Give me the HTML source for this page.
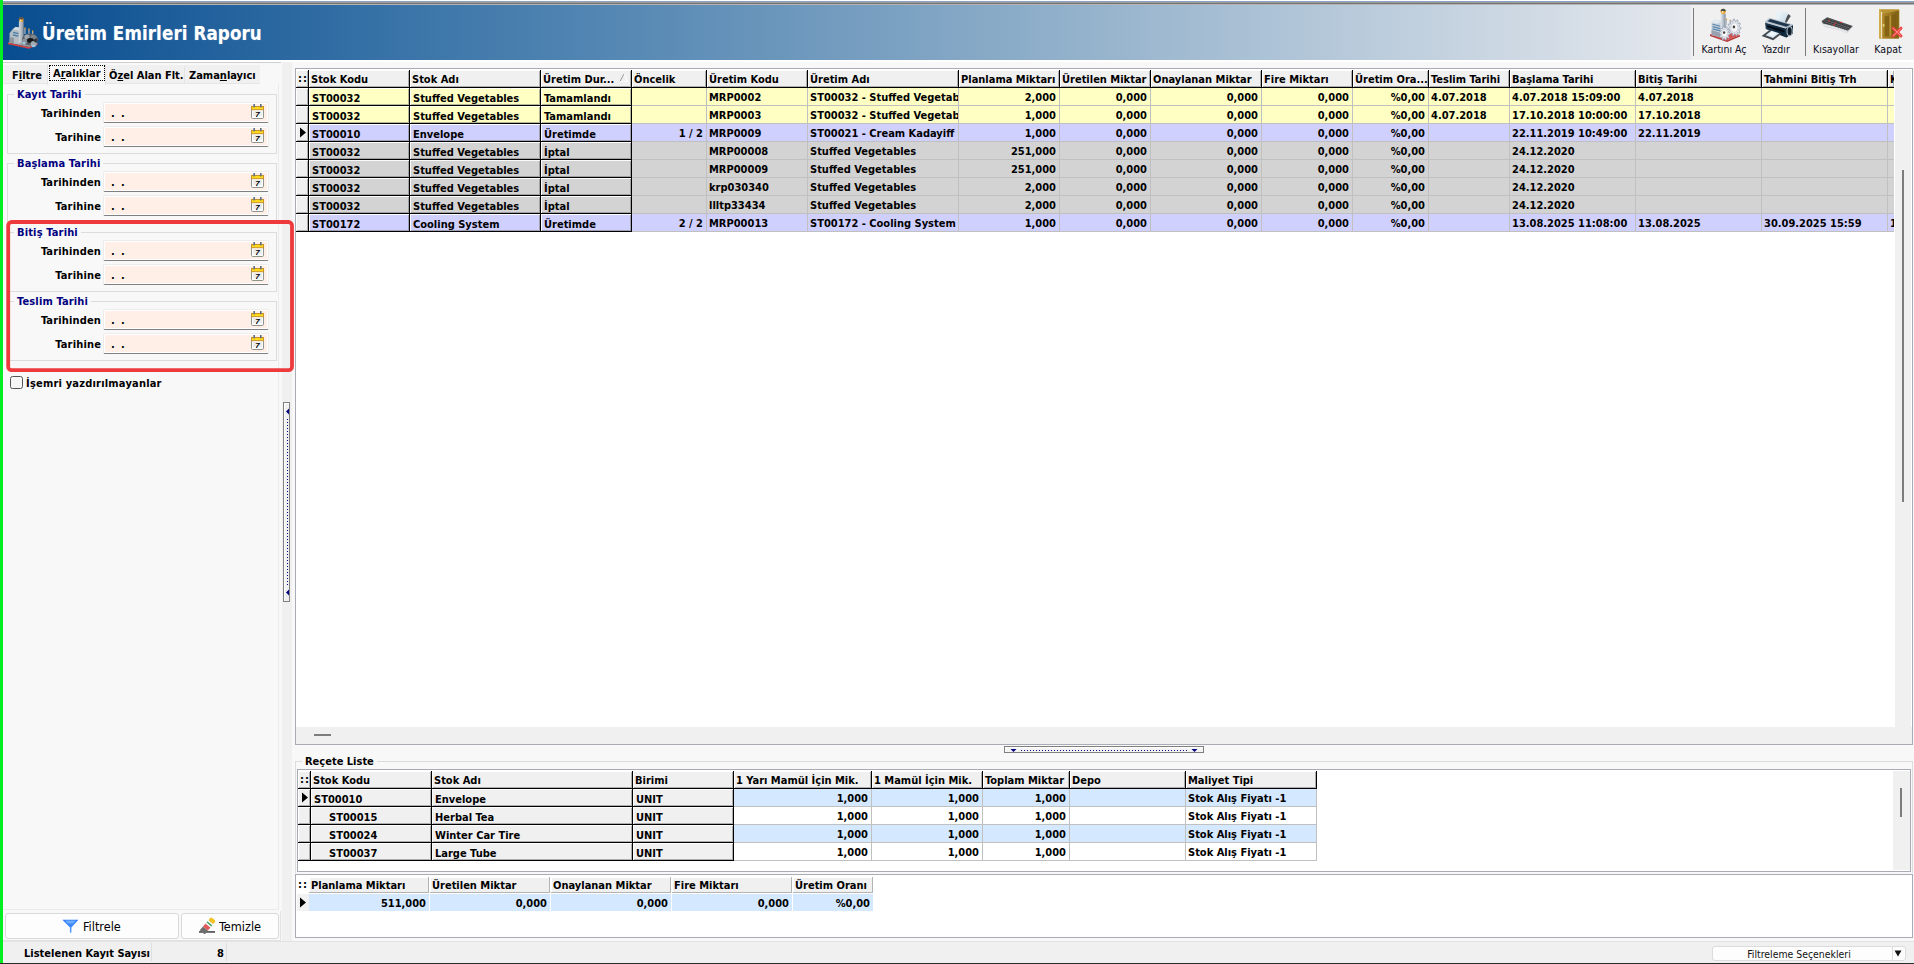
<!DOCTYPE html><html lang="tr"><head><meta charset="utf-8"><title>Üretim Emirleri Raporu</title><style>
*{box-sizing:border-box;margin:0;padding:0}
html,body{width:1914px;height:964px;overflow:hidden;background:#fff}
body{font-family:"DejaVu Sans Condensed","Liberation Sans",sans-serif;font-size:11px;font-weight:bold;color:#000;position:relative;line-height:13px}
.a{position:absolute}
.t{position:absolute;white-space:nowrap;overflow:hidden}
.n{font-weight:normal}
.r{text-align:right}
/* main grid */
.row{position:absolute;left:296px;width:1598px;height:17px}
.c{position:absolute;top:0;height:17px;white-space:nowrap;overflow:hidden;padding:3px 3px 0 2px;border-right:1px solid #c0c0c0;line-height:13px}
.line{position:absolute;left:309px;width:1585px;height:1px;background:#c0c0c0}
.f{padding-left:3px;border-right:1px solid #000;box-shadow:inset 1px 1px 0 rgba(255,255,255,.9),inset -1px -1px 0 rgba(120,120,120,.55);padding-top:4px;height:18px;border-bottom:1px solid #000}
.ind{background:#f0f0f0}
.hc{position:absolute;top:70px;height:18px;background:#f0f0f0;border-right:1px solid #000;border-bottom:1px solid #000;box-shadow:inset 1px 1px 0 #fff,inset -1px -1px 0 rgba(120,120,120,.55);padding:3px 2px 0 2px;white-space:nowrap;overflow:hidden;line-height:13px}
.y{background:#ffffc4}.l{background:#d0d0ff}.g{background:#d3d3d3}
.grp{position:absolute;border:1px solid #dcdcdc}
.gl{position:absolute;color:#000080;background:#f8f8f8;padding:0 3px;white-space:nowrap;line-height:13px;letter-spacing:.15px}
.inp{position:absolute;left:103px;width:166px;height:21px;background:#ffefe6;border:1px solid #ececec;border-bottom:1px solid #808080;border-radius:2px;box-shadow:inset 0 0 0 1px #fff}
.lab{position:absolute;left:10px;width:91px;text-align:right;white-space:nowrap;line-height:13px;letter-spacing:.15px}
.dots{position:absolute;left:7px;top:4px;line-height:13px;letter-spacing:1.4px}
.cal{position:absolute;left:147px;top:0px}
</style></head><body>
<div class="a" style="left:0;top:0;width:1914px;height:1px;background:#fdfdfd"></div>
<div class="a" style="left:0;top:1px;width:1914px;height:1px;background:#8aa2c4"></div>
<div class="a" style="left:0;top:2px;width:1914px;height:1px;background:#9c9c9c"></div><div class="a" style="left:0;top:3px;width:1914px;height:1px;background:#747474"></div>
<div class="a" style="left:0;top:4px;width:1914px;height:1px;background:#b4b4b4"></div>
<div class="a" style="left:3px;top:5px;width:1911px;height:55px;background:linear-gradient(90deg,#084d90 0,#477eae 506px,#8bacc8 1013px,#e5e8ed 1688px)"></div>
<div class="a" style="left:1691px;top:5px;width:223px;height:55px;background:#f0f0f0"></div>
<div class="t" style="left:42px;top:21.5px;font-size:18.6px;line-height:24px;color:#fff;letter-spacing:.1px;text-shadow:0 0 1px rgba(255,255,255,.4)">Üretim Emirleri Raporu</div>
<svg class="a" style="left:6px;top:16px" width="34" height="34" viewBox="0 0 34 34"><defs><linearGradient id="ch2" x1="0" x2="1" y1="0" y2="0"><stop offset="0" stop-color="#d2d8de"/><stop offset=".6" stop-color="#aab2ba"/><stop offset="1" stop-color="#808a94"/></linearGradient></defs><polygon points="2,26.5 14,23 31.8,27.4 23,31" fill="#9aa2a8"/><polygon points="2,26.5 23,31 31.8,27.4 31.8,28.8 23,32.8 2,28.2" fill="#d04444"/><polygon points="3.6,26.6 3.6,17 6.5,13.4 9.5,11 13.2,11.6 13.2,28.6" fill="#b4bcc4"/><polygon points="6.5,13.4 9.5,11 13.2,11.6 13.2,14.6" fill="#d4dae0"/><path d="M7 16.4 L12.6 17.6 M7 19 L12.6 20.2" stroke="#4c7ea8" stroke-width="1.3"/><polygon points="3.6,21 8,22 8,27.6 3.6,26.6" fill="#8e969e"/><rect x="12.9" y="5" width="4.8" height="22" fill="url(#ch2)"/><circle cx="15.3" cy="3.6" r="2.4" fill="#f0a830"/><path d="M12.9 3.4 A2.4 2.4 0 0 1 17.7 3.4 Z" fill="#54504a"/><circle cx="14.6" cy="4.2" r=".8" fill="#fff0c0"/><rect x="18.3" y="13.0" width="1.3" height="5.0" fill="#a8b0b8"/><rect x="18.3" y="11.5" width="1.3" height="1.8" fill="#e8a838"/><rect x="22.3" y="14.0" width="1.3" height="5.0" fill="#a8b0b8"/><rect x="22.3" y="12.5" width="1.3" height="1.8" fill="#e8a838"/><rect x="26.0" y="16.0" width="1.3" height="4.0" fill="#a8b0b8"/><rect x="26.0" y="14.5" width="1.3" height="1.8" fill="#e8a838"/><ellipse cx="24" cy="23.6" rx="8" ry="6" fill="#5a6066"/><ellipse cx="21" cy="21" rx="2.6" ry="2.4" fill="#9ea6ae"/><ellipse cx="27.4" cy="21.4" rx="3" ry="2.6" fill="#7c848c"/><ellipse cx="24.4" cy="24.4" rx="3.4" ry="2.4" fill="#14161a"/><ellipse cx="18.4" cy="25.6" rx="2.6" ry="2.8" fill="#8a929a"/><ellipse cx="27.6" cy="28" rx="3" ry="3" fill="#a2aab2"/><ellipse cx="18" cy="27" rx="1.4" ry="1.2" fill="#9cc8e0"/><ellipse cx="27.4" cy="30" rx="1.6" ry="1.2" fill="#9cc8e0"/><ellipse cx="29.6" cy="24.6" rx="1.6" ry="2" fill="#30343a"/></svg>
<div class="a" style="left:1693px;top:8px;width:1px;height:48px;background:#7a7a7a"></div>
<div class="a" style="left:1805px;top:8px;width:1px;height:48px;background:#7a7a7a"></div>
<div class="t n" style="left:1684px;top:43px;width:80px;text-align:center;font-size:10.5px;color:#0c0c20;line-height:13px">Kartını Aç</div>
<div class="t n" style="left:1736px;top:43px;width:80px;text-align:center;font-size:10.5px;color:#0c0c20;line-height:13px">Yazdır</div>
<div class="t n" style="left:1796px;top:43px;width:80px;text-align:center;font-size:10.5px;color:#0c0c20;line-height:13px">Kısayollar</div>
<div class="t n" style="left:1848px;top:43px;width:80px;text-align:center;font-size:10.5px;color:#0c0c20;line-height:13px">Kapat</div>
<svg class="a" style="left:1708px;top:8px" width="34" height="34" viewBox="0 0 34 34"><defs><linearGradient id="ch" x1="0" x2="1" y1="0" y2="0"><stop offset="0" stop-color="#e2e8ee"/><stop offset=".55" stop-color="#b4bec8"/><stop offset="1" stop-color="#7c8a98"/></linearGradient></defs><polygon points="2,26.3 15,22 32,27 19,32.2" fill="#d85050"/><polygon points="2,26.3 19,32.2 32,27 32,28.6 19,34 2,28" fill="#b83838"/><polygon points="3.5,27 3.5,14.5 7,11.5 13.5,13 13.5,29.5" fill="#c6d2de"/><polygon points="3.5,14.5 7,11.5 13.5,13 10,15.8" fill="#e4eaf0"/><polygon points="3.5,22 13.5,25 13.5,29.5 3.5,27" fill="#98a2ae"/><path d="M4.5 16.3 L12.5 18.3 M4.5 18.6 L12.5 20.6 M4.5 20.9 L12.5 22.9" stroke="#5c86aa" stroke-width="1.1"/><rect x="12.6" y="5.5" width="5" height="17" fill="url(#ch)"/><circle cx="15.2" cy="3.3" r="2.6" fill="#f2a628"/><path d="M12.6 3.3 A2.6 2.6 0 0 1 17.8 3.3 Z" fill="#4a4e54"/><circle cx="14.6" cy="3.9" r=".9" fill="#fff2c8"/><rect x="17.8" y="10.6" width="1.3" height="1.6" fill="#e0a040"/><rect x="21.5" y="11.8" width="1.3" height="1.6" fill="#e0a040"/><rect x="17.9" y="12" width="1.1" height="5" fill="#b4bcc6"/><rect x="21.6" y="13.2" width="1.1" height="4" fill="#b4bcc6"/><path d="M33.00 19.60 L32.93 20.82 L31.09 21.39 L30.84 22.24 L31.95 24.25 L31.39 25.23 L29.60 24.41 L29.04 24.95 L29.14 27.42 L28.26 27.85 L27.10 25.90 L26.40 25.96 L25.46 28.11 L24.54 27.85 L24.37 25.39 L23.76 24.95 L22.08 26.10 L21.41 25.23 L22.29 23.04 L21.96 22.24 L20.07 22.02 L19.87 20.82 L21.52 19.60 L21.57 18.69 L20.07 17.18 L20.40 16.03 L22.29 16.16 L22.71 15.43 L22.08 13.10 L22.83 12.37 L24.37 13.81 L25.02 13.49 L25.46 11.09 L26.40 11.00 L27.10 13.30 L27.78 13.49 L29.14 11.78 L29.97 12.37 L29.60 14.79 L30.09 15.43 L31.95 14.95 L32.40 16.03 L31.09 17.81 L31.23 18.69Z" fill="#e4e8ee" stroke="#8c98ac" stroke-width=".7"/><ellipse cx="26.40" cy="19.60" rx="3.63" ry="4.73" fill="#f6f8fa" stroke="#b4bcc8" stroke-width=".6"/><ellipse cx="25.90" cy="19.00" rx="1.30" ry="1.49" fill="#4a423c"/><path d="M22.20 25.20 L22.13 26.33 L20.54 26.85 L20.29 27.62 L21.13 29.43 L20.56 30.29 L19.04 29.51 L18.48 29.95 L18.33 32.05 L17.48 32.31 L16.60 30.53 L15.95 30.46 L14.87 32.05 L14.06 31.62 L14.16 29.51 L13.67 28.97 L12.07 29.43 L11.61 28.47 L12.66 26.85 L12.51 26.03 L11.00 25.20 L11.07 24.07 L12.66 23.55 L12.91 22.78 L12.07 20.97 L12.64 20.11 L14.16 20.89 L14.72 20.45 L14.87 18.35 L15.72 18.09 L16.60 19.87 L17.25 19.94 L18.33 18.35 L19.14 18.78 L19.04 20.89 L19.53 21.43 L21.13 20.97 L21.59 21.93 L20.54 23.55 L20.69 24.37Z" fill="#e4e8ee" stroke="#8c98ac" stroke-width=".7"/><ellipse cx="16.60" cy="25.20" rx="3.08" ry="3.96" fill="#f6f8fa" stroke="#b4bcc8" stroke-width=".6"/><ellipse cx="16.10" cy="24.60" rx="1.20" ry="1.38" fill="#4a423c"/></svg>
<svg class="a" style="left:1760px;top:8px" width="36" height="34" viewBox="0 0 36 34"><defs><linearGradient id="pp" x1="0" x2="1" y1="0" y2="1"><stop offset="0" stop-color="#f4fafe"/><stop offset="1" stop-color="#c4d8e4"/></linearGradient><linearGradient id="pb" x1="0" x2="1" y1="0" y2="0"><stop offset="0" stop-color="#1c3850"/><stop offset=".6" stop-color="#0a2236"/><stop offset="1" stop-color="#2c4a60"/></linearGradient></defs><polygon points="28.3,6 30.8,8 26,15.5 23,14" fill="#4c5054"/><polygon points="17.3,2.8 28.3,4.6 24.6,15 15.2,11.8" fill="url(#pp)"/><polygon points="17.3,2.8 22,3.6 19,12.8 15.2,11.8" fill="#e6f0f6" opacity=".8"/><polygon points="5,13.5 9.5,9.8 33,16.5 33,18 26,20.5 5,14.8" fill="#b8c2cc"/><polygon points="7.5,13.2 10.2,11 30.5,16.8 26.2,18.8" fill="#20384e"/><polygon points="5,14.2 26,20.2 33,17.5 33,25.5 26,29.6 5.8,21" fill="url(#pb)"/><polygon points="26,20.2 33,17.5 33,25.5 26,29.6" fill="#10283c"/><ellipse cx="29.6" cy="23.2" rx="2.6" ry="4.6" fill="#0c1c2a" stroke="#aab4be" stroke-width="1.1"/><polygon points="7,17.2 24.5,22.4 24.5,24.6 7,19" fill="#020a12"/><path d="M5 14.2 L26 20.2" stroke="#cfd7df" stroke-width=".9"/><polygon points="1.6,28 9.5,22 21.5,25.8 13.2,32.2" fill="#45494e"/><polygon points="5.6,27.2 11.4,22.8 19.2,25.3 13,30" fill="#d4e6f2"/><polygon points="8,26.6 11.8,23.6 16.8,25.2 12.8,28.4" fill="#eef6fc"/></svg>
<svg class="a" style="left:1820px;top:15px" width="36" height="20" viewBox="0 0 36 20"><path d="M1.3 6.6 L7.2 2.4 L33 11.4 L27 18.2 Q14 13.6 5 12 Q2 10.6 1.3 6.6 Z" fill="#d4d6d8"/><path d="M2.4 9.8 Q14 12 27.2 17.4" stroke="#f4f4f4" stroke-width=".8" fill="none"/><path d="M1.6 6 L7.2 2.2 L32.8 11 L28 15.6 Q14 10.6 3 8.6 Z" fill="#4c4e50"/><path d="M5 6 L29.4 14 M6.4 4.4 L31 12.4 M4.2 7.6 L28.2 15.2" stroke="#2c2e30" stroke-width="1" stroke-dasharray="1.6 .7"/><path d="M5.8 5.2 L30.2 13.2 M4.6 6.8 L28.8 14.6" stroke="#77797c" stroke-width=".5"/><rect x="8.4" y="5.2" width="1.6" height="1.2" fill="#e03434"/><rect x="20.4" y="6.8" width="1.6" height="1.2" fill="#e03434"/><rect x="14.8" y="7.6" width="1.6" height="1.2" fill="#e03434"/><rect x="13.2" y="9.2" width="1.6" height="1.2" fill="#e03434"/></svg>
<svg class="a" style="left:1876px;top:8px" width="30" height="34" viewBox="0 0 30 34"><defs><linearGradient id="dg" x1="0" x2="1" y1="0" y2="0"><stop offset="0" stop-color="#b08828"/><stop offset=".5" stop-color="#9a7620"/><stop offset="1" stop-color="#7e5e14"/></linearGradient></defs><rect x="3" y="1.2" width="20.4" height="29.3" rx="1" fill="#ba9434"/><rect x="3" y="1.2" width="2" height="29.3" fill="#d0ac4c"/><rect x="5.2" y="4" width="1" height="26" fill="#f8f4e8"/><polygon points="6.4,6 22.8,2.4 22.8,30.5 6.4,30.5" fill="url(#dg)"/><polygon points="8.6,8.6 13.2,7.6 13.2,28.4 8.6,28.4" fill="#7c5c12" opacity=".8"/><polygon points="15.6,7 20.4,6 20.4,28.4 15.6,28.4" fill="#7c5c12" opacity=".8"/><rect x="13.6" y="7.4" width="1.4" height="21" fill="#c4a044" opacity=".7"/><rect x="6.8" y="16" width="1.6" height="2.6" fill="#e6d070"/><path d="M17.2 20.2 L25 28 M25 20.2 L17.2 28" stroke="#ee4444" stroke-width="3" stroke-linecap="round"/><path d="M17.6 20.6 L24.6 27.6 M24.6 20.6 L17.6 27.6" stroke="#ff8c8c" stroke-width="1" stroke-linecap="round"/></svg>
<div class="a" style="left:0;top:0;width:3px;height:964px;background:#00ee22"></div>
<div class="a" style="left:3px;top:60px;width:1911px;height:2px;background:#fff"></div>
<div class="a" style="left:292px;top:62px;width:1622px;height:880px;background:#f8f8f8"></div>
<div class="a" style="left:3px;top:62px;width:279px;height:880px;background:#f8f8f8"></div>
<div class="a" style="left:282px;top:62px;width:10px;height:880px;background:#f0f0f0"></div>
<div class="a" style="left:3px;top:62px;width:278px;height:1px;background:#cfcfcf"></div>
<div class="a" style="left:3px;top:65px;width:257px;height:19px;background:#f0f0f0;border-bottom:1px solid #e6e6e6"></div>
<div class="a" style="left:47px;top:64px;width:59px;height:21px;background:#f8f8f8;border-left:1px solid #e2e2e2;border-right:1px solid #e2e2e2"></div>
<div class="a" style="left:184px;top:66px;width:1px;height:17px;background:#e4e4e4"></div>
<div class="a" style="left:49px;top:65px;width:56px;height:16px;border:1px dotted #000"></div>
<div class="t" style="left:12px;top:69px;line-height:13px">F<span style="text-decoration:underline">i</span>ltre</div>
<div class="t" style="left:53px;top:67px;line-height:13px">A<span style="text-decoration:underline">r</span>alıklar</div>
<div class="t" style="left:109px;top:69px;line-height:13px">Ö<span style="text-decoration:underline">z</span>el Alan Flt.</div>
<div class="t" style="left:189px;top:69px;line-height:13px">Zama<span style="text-decoration:underline">n</span>layıcı</div>
<div class="a" style="left:278px;top:84px;width:1px;height:826px;background:#ebebeb"></div>
<div class="a" style="left:3px;top:909px;width:276px;height:1px;background:#ebebeb"></div>
<div class="grp" style="left:7px;top:94px;width:270px;height:60px"></div>
<div class="gl" style="left:14px;top:88px">Kayıt Tarihi</div>
<div class="lab" style="top:107px">Tarihinden</div>
<div class="inp" style="top:102px"><span class="dots">. .</span><svg class="cal" width="15" height="17" viewBox="0 0 15 17"><rect x="0.5" y="3.5" width="12" height="12" rx="1.2" fill="#fff" stroke="#8c948c"/><rect x="2" y="8" width="9" height="5" fill="#ececec"/><rect x="0.5" y="3.5" width="12" height="3.2" fill="#ffd91c" stroke="#c8922a"/><rect x="2.4" y="1" width="1.6" height="3.4" fill="#5f6f80"/><rect x="9" y="1" width="1.6" height="3.4" fill="#5f6f80"/><text x="6.4" y="14.2" font-size="8" font-weight="bold" font-style="italic" text-anchor="middle" fill="#000" font-family="Liberation Sans,sans-serif">7</text></svg></div>
<div class="lab" style="top:131px">Tarihine</div>
<div class="inp" style="top:126px"><span class="dots">. .</span><svg class="cal" width="15" height="17" viewBox="0 0 15 17"><rect x="0.5" y="3.5" width="12" height="12" rx="1.2" fill="#fff" stroke="#8c948c"/><rect x="2" y="8" width="9" height="5" fill="#ececec"/><rect x="0.5" y="3.5" width="12" height="3.2" fill="#ffd91c" stroke="#c8922a"/><rect x="2.4" y="1" width="1.6" height="3.4" fill="#5f6f80"/><rect x="9" y="1" width="1.6" height="3.4" fill="#5f6f80"/><text x="6.4" y="14.2" font-size="8" font-weight="bold" font-style="italic" text-anchor="middle" fill="#000" font-family="Liberation Sans,sans-serif">7</text></svg></div>
<div class="grp" style="left:7px;top:163px;width:270px;height:60px"></div>
<div class="gl" style="left:14px;top:157px">Başlama Tarihi</div>
<div class="lab" style="top:176px">Tarihinden</div>
<div class="inp" style="top:171px"><span class="dots">. .</span><svg class="cal" width="15" height="17" viewBox="0 0 15 17"><rect x="0.5" y="3.5" width="12" height="12" rx="1.2" fill="#fff" stroke="#8c948c"/><rect x="2" y="8" width="9" height="5" fill="#ececec"/><rect x="0.5" y="3.5" width="12" height="3.2" fill="#ffd91c" stroke="#c8922a"/><rect x="2.4" y="1" width="1.6" height="3.4" fill="#5f6f80"/><rect x="9" y="1" width="1.6" height="3.4" fill="#5f6f80"/><text x="6.4" y="14.2" font-size="8" font-weight="bold" font-style="italic" text-anchor="middle" fill="#000" font-family="Liberation Sans,sans-serif">7</text></svg></div>
<div class="lab" style="top:200px">Tarihine</div>
<div class="inp" style="top:195px"><span class="dots">. .</span><svg class="cal" width="15" height="17" viewBox="0 0 15 17"><rect x="0.5" y="3.5" width="12" height="12" rx="1.2" fill="#fff" stroke="#8c948c"/><rect x="2" y="8" width="9" height="5" fill="#ececec"/><rect x="0.5" y="3.5" width="12" height="3.2" fill="#ffd91c" stroke="#c8922a"/><rect x="2.4" y="1" width="1.6" height="3.4" fill="#5f6f80"/><rect x="9" y="1" width="1.6" height="3.4" fill="#5f6f80"/><text x="6.4" y="14.2" font-size="8" font-weight="bold" font-style="italic" text-anchor="middle" fill="#000" font-family="Liberation Sans,sans-serif">7</text></svg></div>
<div class="grp" style="left:7px;top:232px;width:270px;height:60px"></div>
<div class="gl" style="left:14px;top:226px">Bitiş Tarihi</div>
<div class="lab" style="top:245px">Tarihinden</div>
<div class="inp" style="top:240px"><span class="dots">. .</span><svg class="cal" width="15" height="17" viewBox="0 0 15 17"><rect x="0.5" y="3.5" width="12" height="12" rx="1.2" fill="#fff" stroke="#8c948c"/><rect x="2" y="8" width="9" height="5" fill="#ececec"/><rect x="0.5" y="3.5" width="12" height="3.2" fill="#ffd91c" stroke="#c8922a"/><rect x="2.4" y="1" width="1.6" height="3.4" fill="#5f6f80"/><rect x="9" y="1" width="1.6" height="3.4" fill="#5f6f80"/><text x="6.4" y="14.2" font-size="8" font-weight="bold" font-style="italic" text-anchor="middle" fill="#000" font-family="Liberation Sans,sans-serif">7</text></svg></div>
<div class="lab" style="top:269px">Tarihine</div>
<div class="inp" style="top:264px"><span class="dots">. .</span><svg class="cal" width="15" height="17" viewBox="0 0 15 17"><rect x="0.5" y="3.5" width="12" height="12" rx="1.2" fill="#fff" stroke="#8c948c"/><rect x="2" y="8" width="9" height="5" fill="#ececec"/><rect x="0.5" y="3.5" width="12" height="3.2" fill="#ffd91c" stroke="#c8922a"/><rect x="2.4" y="1" width="1.6" height="3.4" fill="#5f6f80"/><rect x="9" y="1" width="1.6" height="3.4" fill="#5f6f80"/><text x="6.4" y="14.2" font-size="8" font-weight="bold" font-style="italic" text-anchor="middle" fill="#000" font-family="Liberation Sans,sans-serif">7</text></svg></div>
<div class="grp" style="left:7px;top:301px;width:270px;height:60px"></div>
<div class="gl" style="left:14px;top:295px">Teslim Tarihi</div>
<div class="lab" style="top:314px">Tarihinden</div>
<div class="inp" style="top:309px"><span class="dots">. .</span><svg class="cal" width="15" height="17" viewBox="0 0 15 17"><rect x="0.5" y="3.5" width="12" height="12" rx="1.2" fill="#fff" stroke="#8c948c"/><rect x="2" y="8" width="9" height="5" fill="#ececec"/><rect x="0.5" y="3.5" width="12" height="3.2" fill="#ffd91c" stroke="#c8922a"/><rect x="2.4" y="1" width="1.6" height="3.4" fill="#5f6f80"/><rect x="9" y="1" width="1.6" height="3.4" fill="#5f6f80"/><text x="6.4" y="14.2" font-size="8" font-weight="bold" font-style="italic" text-anchor="middle" fill="#000" font-family="Liberation Sans,sans-serif">7</text></svg></div>
<div class="lab" style="top:338px">Tarihine</div>
<div class="inp" style="top:333px"><span class="dots">. .</span><svg class="cal" width="15" height="17" viewBox="0 0 15 17"><rect x="0.5" y="3.5" width="12" height="12" rx="1.2" fill="#fff" stroke="#8c948c"/><rect x="2" y="8" width="9" height="5" fill="#ececec"/><rect x="0.5" y="3.5" width="12" height="3.2" fill="#ffd91c" stroke="#c8922a"/><rect x="2.4" y="1" width="1.6" height="3.4" fill="#5f6f80"/><rect x="9" y="1" width="1.6" height="3.4" fill="#5f6f80"/><text x="6.4" y="14.2" font-size="8" font-weight="bold" font-style="italic" text-anchor="middle" fill="#000" font-family="Liberation Sans,sans-serif">7</text></svg></div>
<svg class="a" style="left:0;top:210px" width="300" height="170"><rect x="8.2" y="12" width="283.8" height="148.2" rx="3.5" fill="none" stroke="#ee3a3c" stroke-width="3.8"/></svg>
<div class="a" style="left:10px;top:376px;width:13px;height:13px;background:#f6f6f6;border:1px solid #555;border-radius:2.5px"></div>
<div class="t" style="left:26px;top:377px;line-height:13px;letter-spacing:.2px">İşemri yazdırılmayanlar</div>
<div class="a" style="left:283px;top:402px;width:7px;height:200px;background:#f0f0f0;border:1px solid #808080;box-shadow:inset 1px 1px 0 #fff"></div>
<svg class="a" style="left:283px;top:402px" width="8" height="200"><polygon points="3,9.5 6,6.5 6,12.5" fill="#000080"/><polygon points="3,190.5 6,187.5 6,193.5" fill="#000080"/><line x1="4.5" y1="17" x2="4.5" y2="184" stroke="#000080" stroke-width="1" stroke-dasharray="1 2"/></svg>
<div class="a" style="left:5px;top:913px;width:174px;height:26px;background:#fdfdfd;border:1px solid #d9d9d9;border-radius:3px"></div>
<div class="t n" style="left:83px;top:919px;font-size:12.6px;line-height:16px;color:#000">Filtrele</div>
<div class="a" style="left:181px;top:913px;width:98px;height:26px;background:#fdfdfd;border:1px solid #d9d9d9;border-radius:3px"></div>
<div class="t n" style="left:219px;top:919px;font-size:12.6px;line-height:16px;color:#000">Temizle</div>
<svg class="a" style="left:61px;top:918px" width="19" height="16" viewBox="0 0 19 16"><defs><linearGradient id="fg" x1="0" x2="0" y1="0" y2="1"><stop offset="0" stop-color="#2a78ff"/><stop offset="1" stop-color="#5aa0ff"/></linearGradient></defs><path d="M1.4 1.8 H17.4 L10.4 9.4 V14.8 H8.9 V9.4 Z" fill="url(#fg)"/><path d="M4 2.6 H15 L11.8 5.4 H7 Z" fill="#8cc0ff" opacity=".7"/></svg>
<svg class="a" style="left:197px;top:915px" width="20" height="19" viewBox="0 0 20 19"><rect x="2" y="16.2" width="16" height="1.5" fill="#3c3c3c"/><g transform="translate(1 0.5) rotate(-50 10 10)"><rect x="1" y="6.8" width="5" height="6.4" fill="#6e6e6e"/><rect x="6" y="6.8" width="4" height="6.4" fill="#e05a5a"/><rect x="10" y="6.8" width="1.4" height="6.4" fill="#f4f4f4"/><rect x="11.4" y="6.8" width="1.6" height="6.4" fill="#3aa060"/><rect x="13" y="6.8" width="1.2" height="6.4" fill="#f4f4f4"/><rect x="14.2" y="6.8" width="4.4" height="6.4" rx="1.6" fill="#f0c428"/></g></svg>
<div class="a" style="left:280px;top:911px;width:1px;height:30px;background:#e2e2e2"></div>
<div class="a" style="left:3px;top:941px;width:1911px;height:22px;background:#f0f0f0;border-top:1px solid #e3e3e3"></div>
<div class="a" style="left:0;top:963px;width:1914px;height:1px;background:#2a2a2a"></div>
<div class="a" style="left:3px;top:940px;width:278px;height:1px;background:#e2e2e2"></div>
<div class="t" style="left:24px;top:947px;line-height:13px">Listelenen Kayıt Sayısı</div>
<div class="t" style="left:217px;top:947px;line-height:13px">8</div>
<div class="a" style="left:151px;top:943px;width:1px;height:18px;background:#dedede"></div>
<div class="a" style="left:226px;top:943px;width:1px;height:18px;background:#dedede"></div>
<div class="a" style="left:1712px;top:946px;width:194px;height:15px;background:#fdfdfd;border:1px solid #dcdcdc;border-radius:3px"></div>
<div class="a" style="left:1892px;top:946px;width:1px;height:15px;background:#dcdcdc"></div>
<div class="t n" style="left:1709px;top:948px;width:180px;text-align:center;font-size:10.4px;line-height:13px;color:#111">Filtreleme Seçenekleri</div>
<svg class="a" style="left:1893px;top:949px" width="10" height="9"><polygon points="1.5,1.5 8.5,1.5 5,7.5" fill="#111"/></svg>
<div class="a" style="left:295px;top:68px;width:1618px;height:677px;background:#fff;border:1px solid #a9acb4"></div>
<div class="a" style="left:1895px;top:70px;width:16px;height:657px;background:#f0f0f0"></div>
<div class="a" style="left:1902px;top:170px;width:2px;height:332px;background:#7d7d7d"></div>
<div class="a" style="left:296px;top:727px;width:1616px;height:17px;background:#f0f0f0"></div>
<div class="a" style="left:314px;top:734px;width:17px;height:2px;background:#7d7d7d"></div>
<div class="hc" style="left:296px;width:13px;padding:2px 0 0 2px;letter-spacing:1px">::</div>
<div class="hc" style="left:309px;width:101px">Stok Kodu</div>
<div class="hc" style="left:410px;width:131px">Stok Adı</div>
<div class="hc" style="left:541px;width:91px">Üretim Dur...<svg class="a" style="right:3px;top:3px" width="9" height="9"><path d="M1 8.5 L5 0.8" stroke="#9a9a9a" stroke-width="1" fill="none"/><path d="M5 0.8 L8.5 8.5 H1" stroke="#fff" stroke-width="1" fill="none"/></svg></div>
<div class="hc" style="left:632px;width:75px">Öncelik</div>
<div class="hc" style="left:707px;width:101px">Üretim Kodu</div>
<div class="hc" style="left:808px;width:151px">Üretim Adı</div>
<div class="hc" style="left:959px;width:101px">Planlama Miktarı</div>
<div class="hc" style="left:1060px;width:91px">Üretilen Miktar</div>
<div class="hc" style="left:1151px;width:111px">Onaylanan Miktar</div>
<div class="hc" style="left:1262px;width:91px">Fire Miktarı</div>
<div class="hc" style="left:1353px;width:76px">Üretim Ora...</div>
<div class="hc" style="left:1429px;width:81px">Teslim Tarihi</div>
<div class="hc" style="left:1510px;width:126px">Başlama Tarihi</div>
<div class="hc" style="left:1636px;width:126px">Bitiş Tarihi</div>
<div class="hc" style="left:1762px;width:126px">Tahmini Bitiş Trh</div>
<div class="hc" style="left:1888px;width:6px;border-right:none;padding-left:2px">K</div>
<div class="row y" style="top:88px">
<div class="c f ind" style="left:0;width:13px;padding:0"></div>
<div class="c f" style="left:13px;width:101px">ST00032</div>
<div class="c f" style="left:114px;width:131px">Stuffed Vegetables</div>
<div class="c f" style="left:245px;width:91px">Tamamlandı</div>
<div class="c r" style="left:336px;width:75px"></div>
<div class="c" style="left:411px;width:101px">MRP0002</div>
<div class="c" style="left:512px;width:151px">ST00032 - Stuffed Vegetables</div>
<div class="c r" style="left:663px;width:101px">2,000</div>
<div class="c r" style="left:764px;width:91px">0,000</div>
<div class="c r" style="left:855px;width:111px">0,000</div>
<div class="c r" style="left:966px;width:91px">0,000</div>
<div class="c r" style="left:1057px;width:76px">%0,00</div>
<div class="c" style="left:1133px;width:81px">4.07.2018</div>
<div class="c" style="left:1214px;width:126px">4.07.2018 15:09:00</div>
<div class="c" style="left:1340px;width:126px">4.07.2018</div>
<div class="c" style="left:1466px;width:126px"></div>
<div class="c" style="left:1592px;width:6px;border-right:none;padding-right:0"></div>
</div>
<div class="line" style="left:632px;width:1262px;top:105px"></div>
<div class="row y" style="top:106px">
<div class="c f ind" style="left:0;width:13px;padding:0"></div>
<div class="c f" style="left:13px;width:101px">ST00032</div>
<div class="c f" style="left:114px;width:131px">Stuffed Vegetables</div>
<div class="c f" style="left:245px;width:91px">Tamamlandı</div>
<div class="c r" style="left:336px;width:75px"></div>
<div class="c" style="left:411px;width:101px">MRP0003</div>
<div class="c" style="left:512px;width:151px">ST00032 - Stuffed Vegetables</div>
<div class="c r" style="left:663px;width:101px">1,000</div>
<div class="c r" style="left:764px;width:91px">0,000</div>
<div class="c r" style="left:855px;width:111px">0,000</div>
<div class="c r" style="left:966px;width:91px">0,000</div>
<div class="c r" style="left:1057px;width:76px">%0,00</div>
<div class="c" style="left:1133px;width:81px">4.07.2018</div>
<div class="c" style="left:1214px;width:126px">17.10.2018 10:00:00</div>
<div class="c" style="left:1340px;width:126px">17.10.2018</div>
<div class="c" style="left:1466px;width:126px"></div>
<div class="c" style="left:1592px;width:6px;border-right:none;padding-right:0"></div>
</div>
<div class="line" style="left:632px;width:1262px;top:123px"></div>
<div class="row l" style="top:124px">
<div class="c f ind" style="left:0;width:13px;padding:0"><svg class="a" style="left:3px;top:2px" width="8" height="13"><polygon points="1,1.5 7,6.5 1,11.5" fill="#000"/></svg></div>
<div class="c f" style="left:13px;width:101px">ST00010</div>
<div class="c f" style="left:114px;width:131px">Envelope</div>
<div class="c f" style="left:245px;width:91px">Üretimde</div>
<div class="c r" style="left:336px;width:75px">1 / 2</div>
<div class="c" style="left:411px;width:101px">MRP0009</div>
<div class="c" style="left:512px;width:151px">ST00021 - Cream Kadayiff</div>
<div class="c r" style="left:663px;width:101px">1,000</div>
<div class="c r" style="left:764px;width:91px">0,000</div>
<div class="c r" style="left:855px;width:111px">0,000</div>
<div class="c r" style="left:966px;width:91px">0,000</div>
<div class="c r" style="left:1057px;width:76px">%0,00</div>
<div class="c" style="left:1133px;width:81px"></div>
<div class="c" style="left:1214px;width:126px">22.11.2019 10:49:00</div>
<div class="c" style="left:1340px;width:126px">22.11.2019</div>
<div class="c" style="left:1466px;width:126px"></div>
<div class="c" style="left:1592px;width:6px;border-right:none;padding-right:0"></div>
</div>
<div class="line" style="left:632px;width:1262px;top:141px"></div>
<div class="row g" style="top:142px">
<div class="c f ind" style="left:0;width:13px;padding:0"></div>
<div class="c f" style="left:13px;width:101px">ST00032</div>
<div class="c f" style="left:114px;width:131px">Stuffed Vegetables</div>
<div class="c f" style="left:245px;width:91px">İptal</div>
<div class="c r" style="left:336px;width:75px"></div>
<div class="c" style="left:411px;width:101px">MRP00008</div>
<div class="c" style="left:512px;width:151px">Stuffed Vegetables</div>
<div class="c r" style="left:663px;width:101px">251,000</div>
<div class="c r" style="left:764px;width:91px">0,000</div>
<div class="c r" style="left:855px;width:111px">0,000</div>
<div class="c r" style="left:966px;width:91px">0,000</div>
<div class="c r" style="left:1057px;width:76px">%0,00</div>
<div class="c" style="left:1133px;width:81px"></div>
<div class="c" style="left:1214px;width:126px">24.12.2020</div>
<div class="c" style="left:1340px;width:126px"></div>
<div class="c" style="left:1466px;width:126px"></div>
<div class="c" style="left:1592px;width:6px;border-right:none;padding-right:0"></div>
</div>
<div class="line" style="left:632px;width:1262px;top:159px"></div>
<div class="row g" style="top:160px">
<div class="c f ind" style="left:0;width:13px;padding:0"></div>
<div class="c f" style="left:13px;width:101px">ST00032</div>
<div class="c f" style="left:114px;width:131px">Stuffed Vegetables</div>
<div class="c f" style="left:245px;width:91px">İptal</div>
<div class="c r" style="left:336px;width:75px"></div>
<div class="c" style="left:411px;width:101px">MRP00009</div>
<div class="c" style="left:512px;width:151px">Stuffed Vegetables</div>
<div class="c r" style="left:663px;width:101px">251,000</div>
<div class="c r" style="left:764px;width:91px">0,000</div>
<div class="c r" style="left:855px;width:111px">0,000</div>
<div class="c r" style="left:966px;width:91px">0,000</div>
<div class="c r" style="left:1057px;width:76px">%0,00</div>
<div class="c" style="left:1133px;width:81px"></div>
<div class="c" style="left:1214px;width:126px">24.12.2020</div>
<div class="c" style="left:1340px;width:126px"></div>
<div class="c" style="left:1466px;width:126px"></div>
<div class="c" style="left:1592px;width:6px;border-right:none;padding-right:0"></div>
</div>
<div class="line" style="left:632px;width:1262px;top:177px"></div>
<div class="row g" style="top:178px">
<div class="c f ind" style="left:0;width:13px;padding:0"></div>
<div class="c f" style="left:13px;width:101px">ST00032</div>
<div class="c f" style="left:114px;width:131px">Stuffed Vegetables</div>
<div class="c f" style="left:245px;width:91px">İptal</div>
<div class="c r" style="left:336px;width:75px"></div>
<div class="c" style="left:411px;width:101px">krp030340</div>
<div class="c" style="left:512px;width:151px">Stuffed Vegetables</div>
<div class="c r" style="left:663px;width:101px">2,000</div>
<div class="c r" style="left:764px;width:91px">0,000</div>
<div class="c r" style="left:855px;width:111px">0,000</div>
<div class="c r" style="left:966px;width:91px">0,000</div>
<div class="c r" style="left:1057px;width:76px">%0,00</div>
<div class="c" style="left:1133px;width:81px"></div>
<div class="c" style="left:1214px;width:126px">24.12.2020</div>
<div class="c" style="left:1340px;width:126px"></div>
<div class="c" style="left:1466px;width:126px"></div>
<div class="c" style="left:1592px;width:6px;border-right:none;padding-right:0"></div>
</div>
<div class="line" style="left:632px;width:1262px;top:195px"></div>
<div class="row g" style="top:196px">
<div class="c f ind" style="left:0;width:13px;padding:0"></div>
<div class="c f" style="left:13px;width:101px">ST00032</div>
<div class="c f" style="left:114px;width:131px">Stuffed Vegetables</div>
<div class="c f" style="left:245px;width:91px">İptal</div>
<div class="c r" style="left:336px;width:75px"></div>
<div class="c" style="left:411px;width:101px">llltp33434</div>
<div class="c" style="left:512px;width:151px">Stuffed Vegetables</div>
<div class="c r" style="left:663px;width:101px">2,000</div>
<div class="c r" style="left:764px;width:91px">0,000</div>
<div class="c r" style="left:855px;width:111px">0,000</div>
<div class="c r" style="left:966px;width:91px">0,000</div>
<div class="c r" style="left:1057px;width:76px">%0,00</div>
<div class="c" style="left:1133px;width:81px"></div>
<div class="c" style="left:1214px;width:126px">24.12.2020</div>
<div class="c" style="left:1340px;width:126px"></div>
<div class="c" style="left:1466px;width:126px"></div>
<div class="c" style="left:1592px;width:6px;border-right:none;padding-right:0"></div>
</div>
<div class="line" style="left:632px;width:1262px;top:213px"></div>
<div class="row l" style="top:214px">
<div class="c f ind" style="left:0;width:13px;padding:0"></div>
<div class="c f" style="left:13px;width:101px">ST00172</div>
<div class="c f" style="left:114px;width:131px">Cooling System</div>
<div class="c f" style="left:245px;width:91px">Üretimde</div>
<div class="c r" style="left:336px;width:75px">2 / 2</div>
<div class="c" style="left:411px;width:101px">MRP00013</div>
<div class="c" style="left:512px;width:151px">ST00172 - Cooling System</div>
<div class="c r" style="left:663px;width:101px">1,000</div>
<div class="c r" style="left:764px;width:91px">0,000</div>
<div class="c r" style="left:855px;width:111px">0,000</div>
<div class="c r" style="left:966px;width:91px">0,000</div>
<div class="c r" style="left:1057px;width:76px">%0,00</div>
<div class="c" style="left:1133px;width:81px"></div>
<div class="c" style="left:1214px;width:126px">13.08.2025 11:08:00</div>
<div class="c" style="left:1340px;width:126px">13.08.2025</div>
<div class="c" style="left:1466px;width:126px">30.09.2025 15:59</div>
<div class="c" style="left:1592px;width:6px;border-right:none;padding-right:0">1</div>
</div>
<div class="line" style="left:632px;width:1262px;top:231px"></div>
<div class="a" style="left:1004px;top:746px;width:200px;height:7px;background:#f4f4f4;border:1px solid #808080;box-shadow:inset 1px 1px 0 #fff"></div>
<svg class="a" style="left:1004px;top:746px" width="200" height="7"><polygon points="6.5,3 12.5,3 9.5,6" fill="#000080"/><polygon points="187.5,3 193.5,3 190.5,6" fill="#000080"/><line x1="17" y1="4.5" x2="184" y2="4.5" stroke="#000080" stroke-width="1" stroke-dasharray="1 2"/></svg>
<div class="a" style="left:295px;top:761px;width:1618px;height:112px;border:1px solid #dcdcdc;border-bottom:none"></div>
<div class="t" style="left:302px;top:755px;background:#f8f8f8;padding:0 3px;line-height:13px">Reçete Liste</div>
<div class="a" style="left:297px;top:769px;width:1614px;height:103px;background:#fff;border:1px solid #a9acb4"></div>
<div class="a" style="left:1893px;top:771px;width:17px;height:99px;background:#f0f0f0"></div>
<div class="a" style="left:1900px;top:788px;width:2px;height:29px;background:#7d7d7d"></div>
<div class="hc" style="top:771px;left:298px;width:13px;padding:2px 0 0 2px;letter-spacing:1px">::</div>
<div class="hc" style="top:771px;left:311px;width:121px">Stok Kodu</div>
<div class="hc" style="top:771px;left:432px;width:201px">Stok Adı</div>
<div class="hc" style="top:771px;left:633px;width:101px">Birimi</div>
<div class="hc" style="top:771px;left:734px;width:138px">1 Yarı Mamül İçin Mik.</div>
<div class="hc" style="top:771px;left:872px;width:111px">1 Mamül İçin Mik.</div>
<div class="hc" style="top:771px;left:983px;width:87px">Toplam Miktar</div>
<div class="hc" style="top:771px;left:1070px;width:116px">Depo</div>
<div class="hc" style="top:771px;left:1186px;width:131px">Maliyet Tipi</div>
<div class="row" style="left:298px;width:1019px;top:789px;background:#d4e8ff">
<div class="c f ind" style="left:0;width:13px;padding:0"><svg class="a" style="left:3px;top:2px" width="8" height="13"><polygon points="1,1.5 7,6.5 1,11.5" fill="#000"/></svg></div>
<div class="c f ind" style="left:13px;width:121px;">ST00010</div>
<div class="c f ind" style="left:134px;width:201px;">Envelope</div>
<div class="c f ind" style="left:335px;width:101px;">UNIT</div>
<div class="c r" style="left:436px;width:138px;">1,000</div>
<div class="c r" style="left:574px;width:111px;">1,000</div>
<div class="c r" style="left:685px;width:87px;">1,000</div>
<div class="c" style="left:772px;width:116px;"></div>
<div class="c" style="left:888px;width:131px;">Stok Alış Fiyatı -1</div>
</div>
<div class="line" style="left:734px;width:583px;top:806px"></div>
<div class="row" style="left:298px;width:1019px;top:807px;background:#fff">
<div class="c f ind" style="left:0;width:13px;padding:0"></div>
<div class="c f ind" style="left:13px;width:121px;padding-left:18px;">ST00015</div>
<div class="c f ind" style="left:134px;width:201px;">Herbal Tea</div>
<div class="c f ind" style="left:335px;width:101px;">UNIT</div>
<div class="c r" style="left:436px;width:138px;">1,000</div>
<div class="c r" style="left:574px;width:111px;">1,000</div>
<div class="c r" style="left:685px;width:87px;">1,000</div>
<div class="c" style="left:772px;width:116px;"></div>
<div class="c" style="left:888px;width:131px;">Stok Alış Fiyatı -1</div>
</div>
<div class="line" style="left:734px;width:583px;top:824px"></div>
<div class="row" style="left:298px;width:1019px;top:825px;background:#d4e8ff">
<div class="c f ind" style="left:0;width:13px;padding:0"></div>
<div class="c f ind" style="left:13px;width:121px;padding-left:18px;">ST00024</div>
<div class="c f ind" style="left:134px;width:201px;">Winter Car Tire</div>
<div class="c f ind" style="left:335px;width:101px;">UNIT</div>
<div class="c r" style="left:436px;width:138px;">1,000</div>
<div class="c r" style="left:574px;width:111px;">1,000</div>
<div class="c r" style="left:685px;width:87px;">1,000</div>
<div class="c" style="left:772px;width:116px;"></div>
<div class="c" style="left:888px;width:131px;">Stok Alış Fiyatı -1</div>
</div>
<div class="line" style="left:734px;width:583px;top:842px"></div>
<div class="row" style="left:298px;width:1019px;top:843px;background:#fff">
<div class="c f ind" style="left:0;width:13px;padding:0"></div>
<div class="c f ind" style="left:13px;width:121px;padding-left:18px;">ST00037</div>
<div class="c f ind" style="left:134px;width:201px;">Large Tube</div>
<div class="c f ind" style="left:335px;width:101px;">UNIT</div>
<div class="c r" style="left:436px;width:138px;">1,000</div>
<div class="c r" style="left:574px;width:111px;">1,000</div>
<div class="c r" style="left:685px;width:87px;">1,000</div>
<div class="c" style="left:772px;width:116px;"></div>
<div class="c" style="left:888px;width:131px;">Stok Alış Fiyatı -1</div>
</div>
<div class="line" style="left:734px;width:583px;top:860px"></div>
<div class="a" style="left:295px;top:874px;width:1618px;height:64px;background:#fff;border:1px solid #a9acb4"></div>
<div class="t" style="left:298px;top:878px;letter-spacing:1px;line-height:13px">::</div>
<div class="t" style="left:309px;top:877px;width:120px;height:16px;background:#f0f0f0;border-right:1px solid #b4b4b4;border-bottom:1px solid #b4b4b4;box-shadow:inset 1px 1px 0 #fff;padding:2px 0 0 2px;line-height:13px">Planlama Miktarı</div>
<div class="t r" style="left:309px;top:894px;width:120px;height:17px;background:#d4e8ff;padding:3px 3px 0 0;line-height:13px">511,000</div>
<div class="t" style="left:430px;top:877px;width:120px;height:16px;background:#f0f0f0;border-right:1px solid #b4b4b4;border-bottom:1px solid #b4b4b4;box-shadow:inset 1px 1px 0 #fff;padding:2px 0 0 2px;line-height:13px">Üretilen Miktar</div>
<div class="t r" style="left:430px;top:894px;width:120px;height:17px;background:#d4e8ff;padding:3px 3px 0 0;line-height:13px">0,000</div>
<div class="t" style="left:551px;top:877px;width:120px;height:16px;background:#f0f0f0;border-right:1px solid #b4b4b4;border-bottom:1px solid #b4b4b4;box-shadow:inset 1px 1px 0 #fff;padding:2px 0 0 2px;line-height:13px">Onaylanan Miktar</div>
<div class="t r" style="left:551px;top:894px;width:120px;height:17px;background:#d4e8ff;padding:3px 3px 0 0;line-height:13px">0,000</div>
<div class="t" style="left:672px;top:877px;width:120px;height:16px;background:#f0f0f0;border-right:1px solid #b4b4b4;border-bottom:1px solid #b4b4b4;box-shadow:inset 1px 1px 0 #fff;padding:2px 0 0 2px;line-height:13px">Fire Miktarı</div>
<div class="t r" style="left:672px;top:894px;width:120px;height:17px;background:#d4e8ff;padding:3px 3px 0 0;line-height:13px">0,000</div>
<div class="t" style="left:793px;top:877px;width:80px;height:16px;background:#f0f0f0;border-right:1px solid #b4b4b4;border-bottom:1px solid #b4b4b4;box-shadow:inset 1px 1px 0 #fff;padding:2px 0 0 2px;line-height:13px">Üretim Oranı</div>
<div class="t r" style="left:793px;top:894px;width:80px;height:17px;background:#d4e8ff;padding:3px 3px 0 0;line-height:13px">%0,00</div>
<div class="a" style="left:297px;top:894px;width:12px;height:17px;background:#f2f2f2"></div>
<svg class="a" style="left:299px;top:896px" width="8" height="13"><polygon points="1,1.5 7,6.5 1,11.5" fill="#000"/></svg>
</body></html>
